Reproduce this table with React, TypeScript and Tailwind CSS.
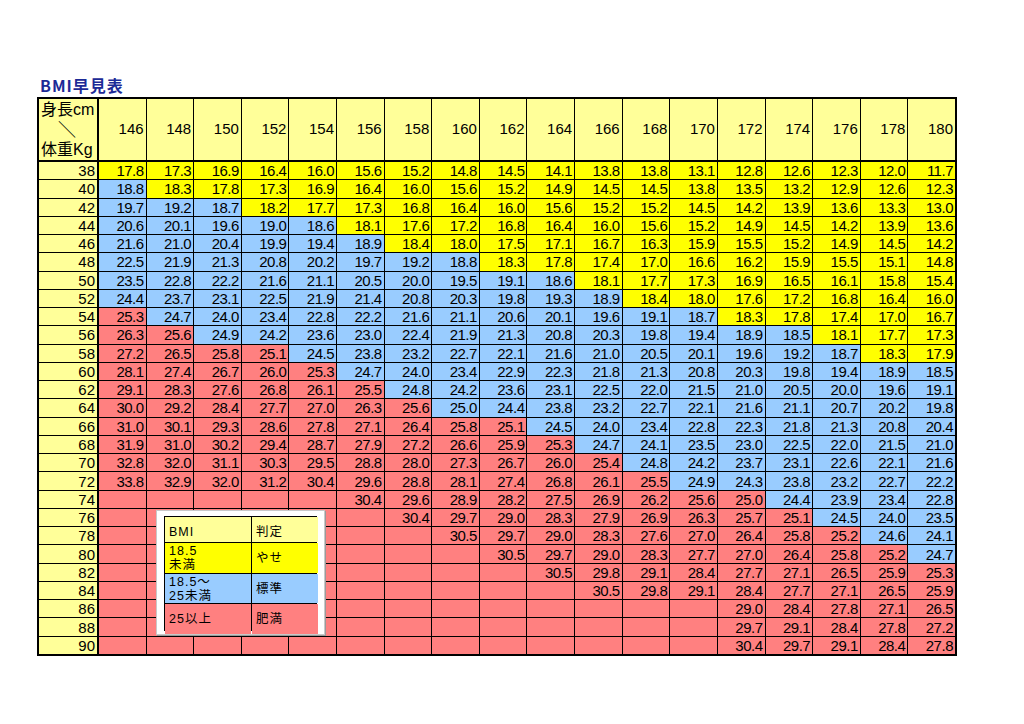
import React from 'react';

// weight, red count, blue count, values ("-" = blank)
const ROWS: [number, number, number, string][] = [
  [38, 0, 0, '17.8 17.3 16.9 16.4 16.0 15.6 15.2 14.8 14.5 14.1 13.8 13.8 13.1 12.8 12.6 12.3 12.0 11.7'],
  [40, 0, 1, '18.8 18.3 17.8 17.3 16.9 16.4 16.0 15.6 15.2 14.9 14.5 14.5 13.8 13.5 13.2 12.9 12.6 12.3'],
  [42, 0, 3, '19.7 19.2 18.7 18.2 17.7 17.3 16.8 16.4 16.0 15.6 15.2 15.2 14.5 14.2 13.9 13.6 13.3 13.0'],
  [44, 0, 5, '20.6 20.1 19.6 19.0 18.6 18.1 17.6 17.2 16.8 16.4 16.0 15.6 15.2 14.9 14.5 14.2 13.9 13.6'],
  [46, 0, 6, '21.6 21.0 20.4 19.9 19.4 18.9 18.4 18.0 17.5 17.1 16.7 16.3 15.9 15.5 15.2 14.9 14.5 14.2'],
  [48, 0, 8, '22.5 21.9 21.3 20.8 20.2 19.7 19.2 18.8 18.3 17.8 17.4 17.0 16.6 16.2 15.9 15.5 15.1 14.8'],
  [50, 0, 10, '23.5 22.8 22.2 21.6 21.1 20.5 20.0 19.5 19.1 18.6 18.1 17.7 17.3 16.9 16.5 16.1 15.8 15.4'],
  [52, 0, 11, '24.4 23.7 23.1 22.5 21.9 21.4 20.8 20.3 19.8 19.3 18.9 18.4 18.0 17.6 17.2 16.8 16.4 16.0'],
  [54, 1, 12, '25.3 24.7 24.0 23.4 22.8 22.2 21.6 21.1 20.6 20.1 19.6 19.1 18.7 18.3 17.8 17.4 17.0 16.7'],
  [56, 2, 13, '26.3 25.6 24.9 24.2 23.6 23.0 22.4 21.9 21.3 20.8 20.3 19.8 19.4 18.9 18.5 18.1 17.7 17.3'],
  [58, 4, 12, '27.2 26.5 25.8 25.1 24.5 23.8 23.2 22.7 22.1 21.6 21.0 20.5 20.1 19.6 19.2 18.7 18.3 17.9'],
  [60, 5, 13, '28.1 27.4 26.7 26.0 25.3 24.7 24.0 23.4 22.9 22.3 21.8 21.3 20.8 20.3 19.8 19.4 18.9 18.5'],
  [62, 6, 12, '29.1 28.3 27.6 26.8 26.1 25.5 24.8 24.2 23.6 23.1 22.5 22.0 21.5 21.0 20.5 20.0 19.6 19.1'],
  [64, 7, 11, '30.0 29.2 28.4 27.7 27.0 26.3 25.6 25.0 24.4 23.8 23.2 22.7 22.1 21.6 21.1 20.7 20.2 19.8'],
  [66, 9, 9, '31.0 30.1 29.3 28.6 27.8 27.1 26.4 25.8 25.1 24.5 24.0 23.4 22.8 22.3 21.8 21.3 20.8 20.4'],
  [68, 10, 8, '31.9 31.0 30.2 29.4 28.7 27.9 27.2 26.6 25.9 25.3 24.7 24.1 23.5 23.0 22.5 22.0 21.5 21.0'],
  [70, 11, 7, '32.8 32.0 31.1 30.3 29.5 28.8 28.0 27.3 26.7 26.0 25.4 24.8 24.2 23.7 23.1 22.6 22.1 21.6'],
  [72, 12, 6, '33.8 32.9 32.0 31.2 30.4 29.6 28.8 28.1 27.4 26.8 26.1 25.5 24.9 24.3 23.8 23.2 22.7 22.2'],
  [74, 14, 4, '- - - - - 30.4 29.6 28.9 28.2 27.5 26.9 26.2 25.6 25.0 24.4 23.9 23.4 22.8'],
  [76, 15, 3, '- - - - - - 30.4 29.7 29.0 28.3 27.9 26.9 26.3 25.7 25.1 24.5 24.0 23.5'],
  [78, 16, 2, '- - - - - - - 30.5 29.7 29.0 28.3 27.6 27.0 26.4 25.8 25.2 24.6 24.1'],
  [80, 17, 1, '- - - - - - - - 30.5 29.7 29.0 28.3 27.7 27.0 26.4 25.8 25.2 24.7'],
  [82, 18, 0, '- - - - - - - - - 30.5 29.8 29.1 28.4 27.7 27.1 26.5 25.9 25.3'],
  [84, 18, 0, '- - - - - - - - - - 30.5 29.8 29.1 28.4 27.7 27.1 26.5 25.9'],
  [86, 18, 0, '- - - - - - - - - - - - - 29.0 28.4 27.8 27.1 26.5'],
  [88, 18, 0, '- - - - - - - - - - - - - 29.7 29.1 28.4 27.8 27.2'],
  [90, 18, 0, '- - - - - - - - - - - - - 30.4 29.7 29.1 28.4 27.8'],
];

const HEIGHTS = Array.from({ length: 18 }, (_, i) => 146 + i * 2);

const cellBg = (i: number, red: number, blue: number) => {
  if (i < red) return 'bg-[#ff8080]';
  if (i < red + blue) return 'bg-[#99ccff]';
  return 'bg-[#ffff00]';
};

const Legend = () => (
  <div className="absolute left-[117px] top-[411px] w-[169px] h-[125px] bg-white border border-[#c8c8c8] shadow-[1px_1px_0_#9a9a9a] pl-[7px] pt-[5px]">
    <div className="grid grid-cols-[86px_66px] grid-rows-[25px_30px_29px_30px] w-[153px] h-[115px] border border-black bg-black gap-px text-[12.5px] leading-[14px] tracking-[1px] text-black font-['Liberation_Sans','Noto_Sans_CJK_JP',sans-serif]">
      <div className="bg-[#ffff99] flex items-end pb-[3px] pl-[4px]">BMI</div>
      <div className="bg-[#ffff99] flex items-end pb-[3px] pl-[4px]">判定</div>
      <div className="bg-[#ffff00] flex flex-col justify-center pl-[4px]">
        <span>18.5</span>
        <span>未満</span>
      </div>
      <div className="bg-[#ffff00] flex items-center pl-[4px]">やせ</div>
      <div className="bg-[#99ccff] flex flex-col justify-center pl-[4px]">
        <span>18.5～</span>
        <span>25未満</span>
      </div>
      <div className="bg-[#99ccff] flex items-center pl-[4px]">標準</div>
      <div className="bg-[#ff8080] flex items-center pl-[4px]">25以上</div>
      <div className="bg-[#ff8080] flex items-center pl-[4px]">肥満</div>
    </div>
  </div>
);

export default function App() {
  return (
    <div className="w-[1024px] h-[724px] bg-white pt-[75px] font-['Liberation_Sans','Noto_Sans_CJK_JP',sans-serif] text-black">
      <div className="pl-[40px] h-[22px] leading-[20px] text-[16px] font-bold tracking-[1px] text-[#1c2a96] font-['Noto_Sans_CJK_JP',sans-serif]">
        BMI早見表
      </div>

      <div className="relative ml-[37px] w-[920px] h-[559px] border-2 border-black bg-black grid grid-cols-[59px_repeat(18,minmax(0,1fr))] grid-rows-[62px_repeat(27,minmax(0,1fr))] gap-px">
        {/* header */}
        <div className="bg-[#ffff99] border-r border-b border-black flex flex-col justify-between pl-[2px] pt-[2px] pb-[1px] text-[16px] leading-[18px]">
          <span>身長cm</span>
          <span className="text-center pr-[4px] text-[18px] leading-[19px]">＼</span>
          <span>体重Kg</span>
        </div>
        {HEIGHTS.map((h) => (
          <div key={h} className="bg-[#ffff99] border-b border-black flex items-center justify-end pr-[2px] text-[15px]">
            {h}
          </div>
        ))}

        {/* body */}
        {ROWS.map(([w, red, blue, vals]) => (
          <React.Fragment key={w}>
            <div className="bg-[#ffff99] border-r border-black flex items-center justify-end pr-[2px] text-[15px] leading-none">
              {w}
            </div>
            {vals.split(' ').map((v, i) => (
              <div
                key={i}
                className={`${cellBg(i, red, blue)} flex items-center justify-end pr-[2px] text-[15px] leading-none tracking-[-0.5px]`}
              >
                {v === '-' ? '' : v}
              </div>
            ))}
          </React.Fragment>
        ))}

        <Legend />
      </div>
    </div>
  );
}
